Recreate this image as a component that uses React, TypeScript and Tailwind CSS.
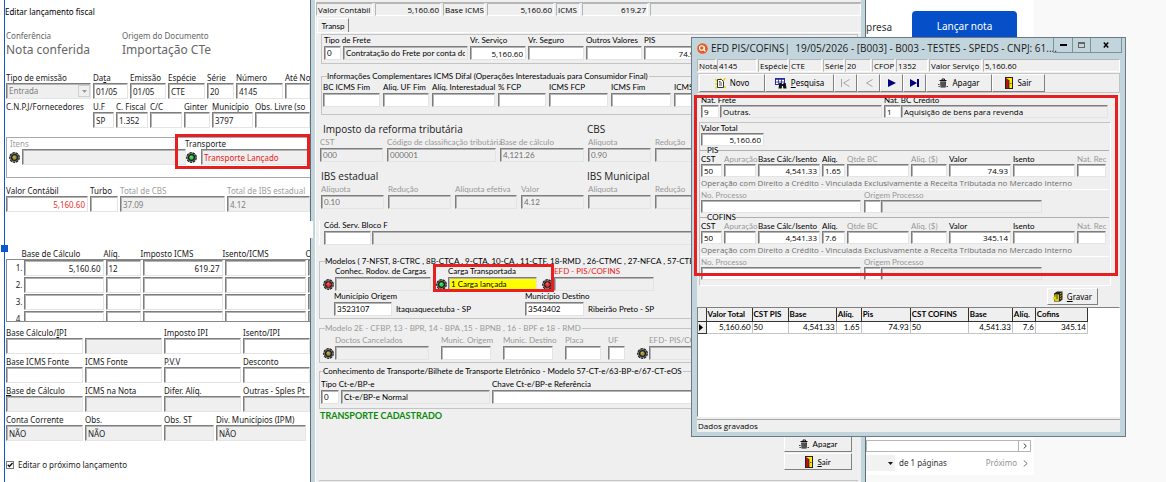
import type { ReactNode } from 'react'
import clsx from 'clsx'

const SUNKEN =
  'border border-t-[#7d7d7d] border-l-[#7d7d7d] border-r-[#e4e4e4] border-b-[#e4e4e4] shadow-[inset_1px_1px_0_#b4b4b4]'
const RAISED = 'border border-t-white border-l-white border-r-[#808080] border-b-[#808080] bg-[#efefef]'
const NOTO = "font-['Noto_Sans',sans-serif]"
const OPEN = "font-['Open_Sans',sans-serif]"
const SANS = "font-['Lato',sans-serif]"

type FieldProps = {
  label?: ReactNode
  name?: string
  value?: string
  className?: string
  labelClass?: string
  inputClass?: string
  gray?: boolean
  muted?: boolean
  right?: boolean
}

// Label above a sunken text box, sized for the main entry form
function FormField({ label, name, value = '', className, labelClass, inputClass, gray, muted, right }: FieldProps) {
  return (
    <label className={clsx('flex min-w-0 flex-col', className)}>
      {label && (
        <span className={clsx('whitespace-nowrap leading-[11px]', muted ? 'text-[#a0a0a0]' : 'text-[#1a1a1a]', labelClass)}>
          {label}
        </span>
      )}
      <input
        aria-label={label ? undefined : name}
        defaultValue={value}
        readOnly={gray}
        className={clsx(
          'h-4 w-full min-w-0 px-[2px] outline-none',
          SUNKEN,
          gray ? 'bg-[#efefef]' : 'bg-white',
          muted && 'text-[#808080]',
          right && 'text-right',
          inputClass,
        )}
      />
    </label>
  )
}

// Same idea, tighter, for the transport and EFD windows
function Field({ label, name, value = '', className, labelClass, inputClass, gray, muted, right }: FieldProps) {
  return (
    <label className={clsx('flex min-w-0 flex-col justify-end', className)}>
      {label && (
        <span className={clsx('whitespace-nowrap leading-[11px]', muted ? 'text-[#999]' : 'text-black', labelClass)}>
          {label}
        </span>
      )}
      <input
        aria-label={label ? undefined : name}
        defaultValue={value}
        readOnly={gray}
        className={clsx(
          'h-[14px] w-full min-w-0 px-[2px] outline-none',
          SUNKEN,
          gray ? 'bg-[#efefef]' : 'bg-white',
          muted && 'text-[#707070]',
          right && 'text-right',
          inputClass,
        )}
      />
    </label>
  )
}

function Led({ color, cross }: { color: string; cross?: boolean }) {
  return (
    <svg className="h-[11px] w-[11px] shrink-0" viewBox="0 0 11 11">
      <circle cx="5.5" cy="5.5" r="4.8" fill="#8c8c8c" stroke="#222" strokeWidth="1.2" strokeDasharray="2.5 0.8" />
      <circle cx="5.5" cy="5.5" r="3.6" fill="#1c1c1c" />
      <circle cx="5.5" cy="5.5" r="2.2" fill={color} />
      {cross && <path d="M5.5 2.6v5.8M2.6 5.5h5.8" stroke={color} strokeWidth="1.6" />}
      <circle cx="5" cy="4.8" r="0.7" fill="#fff" opacity="0.5" />
    </svg>
  )
}

function TrashIcon() {
  return (
    <svg className="h-[10px] w-[10px]" viewBox="0 0 10 10">
      <path d="M1.5 2.5h7M4 1h2.5v1.5H4z" stroke="#111" fill="none" />
      <path d="M2.2 3.5h5.8L7.6 9.5h-5z" fill="#222" />
      <path d="M4 4v5M6 4v5" stroke="#aaa" strokeWidth="0.7" />
      <path d="M0 6.5h1.6M.5 8.5h1.4M8.5 8.5H10" stroke="#111" strokeWidth="0.8" />
    </svg>
  )
}

function DoorIcon() {
  return (
    <svg className="h-3 w-2" viewBox="0 0 8 12">
      <rect x="0.5" y="0.5" width="7" height="11" fill="#ffeb00" stroke="#222" />
      <path d="M1 1l3 2v8.5L1 11z" fill="#b31217" />
      <path d="M4 3v8.5" stroke="#222" strokeWidth="0.8" />
      <path d="M5.3 6.5h1" stroke="#222" />
    </svg>
  )
}

function NewIcon() {
  return (
    <svg className="h-[11px] w-[11px]" viewBox="0 0 11 11">
      <path d="M0 1l3 3M10.5 0L8 3M0 10.5l2.5-2M11 10L8.5 8M5.5 0v2M0 6h2" stroke="#e8d800" strokeWidth="1.4" />
      <path d="M2.5 1.5h4l2 2v6h-6z" fill="#fff" stroke="#222" strokeWidth="0.9" />
      <path d="M4 5h3M4 7h3M4 3.5h1.5" stroke="#222" strokeWidth="0.8" />
    </svg>
  )
}

function SearchIcon() {
  return (
    <svg className="h-[11px] w-3" viewBox="0 0 12 11">
      <rect x="0.5" y="0.5" width="9" height="6" fill="#fff" stroke="#2a2a9c" />
      <path d="M0 1.5h10M3.5 1v5M6.5 1v5M1 4h8" stroke="#2a2a9c" strokeWidth="0.8" />
      <path d="M3.5 10.5L4.3 5h2.2l.6 1.5h.8L8.5 5h2.2l.8 5.5H8.3L8 8H7l-.3 2.5z" fill="#111" />
    </svg>
  )
}

function SaveIcon() {
  return (
    <svg className="h-[11px] w-[10px]" viewBox="0 0 10 11">
      <path d="M1 2.5L4 .5h5.5v8L7 10.5H1z" fill="#222" />
      <path d="M1.5 3.5h4.5v6.5H1.5z" fill="#ded000" />
      <path d="M2.5 5h2.5M2.5 7h2.5" stroke="#222" strokeWidth="0.8" />
      <path d="M7 3l1.5-1M7 5.5l1.5-1M7 8l1.5-1" stroke="#e8d800" strokeWidth="0.9" />
      <circle cx="1.5" cy="7" r="1.5" fill="#e8d800" />
    </svg>
  )
}

function LogoIcon() {
  return (
    <svg className="h-[11px] w-[11px] shrink-0" viewBox="0 0 11 11">
      <circle cx="5.5" cy="5.5" r="5.3" fill="#ea5b21" />
      <circle cx="4.8" cy="5" r="2.3" fill="none" stroke="#fff" strokeWidth="1.1" />
      <path d="M6.2 6.2l2.3 2.3M7.5 3.5v3" stroke="#fff" strokeWidth="1.1" />
    </svg>
  )
}

function ToolButton({ icon, className, children }: { icon?: ReactNode; className?: string; children?: ReactNode }) {
  return (
    <button type="button" className={clsx('flex items-center justify-center gap-1', RAISED, className)}>
      {icon}
      {children && <span>{children}</span>}
    </button>
  )
}

const icmsRows = [
  { id: '1.', base: '5,160.60', rate: '12', tax: '619.27' },
  { id: '2.', base: '', rate: '', tax: '' },
  { id: '3.', base: '', rate: '', tax: '' },
  { id: '4.', base: '', rate: '', tax: '' },
]

function CellInput({ label, value, right }: { label: string; value?: string; right?: boolean }) {
  return (
    <input
      aria-label={label}
      defaultValue={value}
      className={clsx('block h-4 w-full bg-white px-[2px] outline-none', SUNKEN, right && 'text-right')}
    />
  )
}

function EntryForm() {
  return (
    <section className={clsx('w-[310px] shrink-0 overflow-hidden bg-white pl-1 text-[8px] text-[#1a1a1a]', NOTO)}>
      <div className="relative min-h-full border-l border-[#1258cf] pl-px">
        <span className="absolute -left-1 top-[245px] h-[7px] w-[7px] bg-[#0b57d0]" />
        <h1 className="-ml-px pt-[6px] leading-3 text-black">Editar lançamento fiscal</h1>
        <div className="mt-3 flex text-[#666]">
          <div className="w-[116px]">
            <p className="leading-3">Conferência</p>
            <p className="text-xs leading-4">Nota conferida</p>
          </div>
          <div>
            <p className="leading-3">Origem do Documento</p>
            <p className="text-xs leading-4">Importação CTe</p>
          </div>
        </div>

        <div className="mt-[14px] flex gap-[2px]">
          <label className="flex w-[85px] flex-col">
            <span className="leading-[11px]">Tipo de emissão</span>
            <span className={clsx('flex h-4 bg-[#efefef]', SUNKEN)}>
              <select className="min-w-0 flex-1 appearance-none pl-[2px] text-[#808080] outline-none">
                <option>Entrada</option>
              </select>
              <span className="my-px flex w-3 items-center justify-center border border-[#d0d0d0]">
                <svg className="h-[3px] w-[5px]" viewBox="0 0 5 3"><path d="M0 0h5L2.5 3z" fill="#999" /></svg>
              </span>
            </span>
          </label>
          <FormField label={<>Da<u>t</u>a</>} value="01/05" className="w-[35px]" />
          <FormField label="Emissão" value="01/05" className="w-[36px]" />
          <FormField label="Espécie" value="CTE" className="w-[37px]" />
          <FormField label="Série" value="20" className="w-[27px]" />
          <FormField label="Número" value="4145" className="w-[47px]" />
          <FormField label="Até No" className="flex-1" />
        </div>

        <div className="mt-[2px] flex gap-[2px]">
          <span className="w-[85px] whitespace-nowrap leading-[11px]">C.N.P.J/Fornecedores</span>
          <FormField label="U.F" value="SP" className="w-[21px]" />
          <FormField label="C. Fiscal" value="1.352" className="w-8" />
          <FormField label="C/C" className="w-8" />
          <FormField label="Ginter" className="w-[26px]" />
          <FormField label="Município" value="3797" className="w-[41px]" />
          <FormField label="Obs. Livre (so" className="flex-1" />
        </div>

        <div className="relative mt-[9px] flex border-y border-l border-[#a8a8a8] pb-3 pl-[2px]">
          <div className="flex w-[177px] items-end gap-[2px]">
            <span className="mb-[2px] flex"><Led color="#a3923a" /></span>
            <FormField label="Itens" gray muted className="flex-1" labelClass="-ml-3" />
          </div>
          <div className="flex flex-1 items-end gap-1">
            <span className="mb-[2px] flex"><Led color="#2fcf3f" /></span>
            <FormField
              label="Transporte"
              value="Transporte Lançado"
              gray
              className="flex-1"
              labelClass="-ml-4"
              inputClass="text-[#f01818]"
            />
          </div>
          <span className="pointer-events-none absolute -top-1 right-0 h-[35px] w-[135px] border-[3px] border-[#e62020]" />
        </div>

        <div className="mt-[7px] flex gap-[2px]">
          <FormField label="Valor Contábil" value="5,160.60" right className="w-[82px]" inputClass="text-[#f03030]" />
          <FormField label="Turbo" className="w-[28px]" />
          <FormField label="Total de CBS" value="37.09" gray muted className="w-[105px]" />
          <FormField label="Total de IBS estadual" value="4.12" gray muted className="flex-1" />
        </div>

        <div className="mt-9">
          <div className="h-[74px] overflow-hidden border-b border-[#8a8a8a]">
            <table className="w-[384px] table-fixed border-collapse">
              <thead>
                <tr className="h-[11px] text-left leading-[11px]">
                  <th className="w-[17px]" />
                  <th className="w-[82px] font-normal"><span className="-ml-[2px] block">Base de Cálculo</span></th>
                  <th className="w-[37px] font-normal"><span className="-ml-[2px] block">Alíq.</span></th>
                  <th className="w-[82px] font-normal"><span className="-ml-[2px] block">Imposto ICMS</span></th>
                  <th className="w-[83px] font-normal"><span className="-ml-[2px] block">Isento/ICMS</span></th>
                  <th className="w-[83px] font-normal"><span className="-ml-[2px] block">Outras</span></th>
                </tr>
              </thead>
              <tbody className="border-l border-t border-[#8a8a8a]">
                {icmsRows.map((row) => (
                  <tr key={row.id} className="h-[17px]">
                    <td className="pr-px text-right">{row.id}</td>
                    <td className="pr-[2px]"><CellInput label="Base de Cálculo" value={row.base} right /></td>
                    <td className="pr-[2px]"><CellInput label="Alíq." value={row.rate} /></td>
                    <td className="pr-[2px]"><CellInput label="Imposto ICMS" value={row.tax} right /></td>
                    <td className="pr-[2px]"><CellInput label="Isento/ICMS" /></td>
                    <td><CellInput label="Outras" /></td>
                  </tr>
                ))}
              </tbody>
            </table>
          </div>
        </div>

        <div className="mt-[5px] flex gap-[2px]">
          <FormField label={<>Base Cálculo/<u>I</u>PI</>} className="w-[77px]" />
          <FormField name="Código IPI" gray className="w-[77px] justify-end" />
          <FormField label="Imposto IPI" className="w-[77px]" />
          <FormField label="Isento/IPI" className="flex-1" />
        </div>
        <div className="mt-[2px] flex gap-[2px]">
          <FormField label="Base ICMS Fonte" className="w-[77px]" />
          <FormField label="ICMS Fonte" className="w-[77px]" />
          <FormField label="P.V.V" className="w-[77px]" />
          <FormField label="Desconto" className="flex-1" />
        </div>
        <div className="mt-[2px] flex gap-[2px]">
          <FormField label={<><u>B</u>ase de Cálculo</>} gray className="w-[77px]" />
          <FormField label="ICMS na Nota" gray className="w-[77px]" />
          <FormField label="Difer. Alíq." gray className="w-[77px]" />
          <FormField label="Outras - Sples Pt" gray className="flex-1" />
        </div>
        <div className="mt-[2px] flex gap-[2px]">
          <FormField label="Conta Corrente" value="NÃO" gray className="w-[77px]" />
          <FormField label="Obs." value="NÃO" gray className="w-[77px]" />
          <FormField label="Obs. ST" gray className="w-[50px]" />
          <FormField label="Div. Municípios (IPM)" value="NÃO" gray className="w-[90px]" />
        </div>

        <label className="mt-[18px] flex items-center gap-1 leading-3">
          <span className="relative flex">
            <input
              type="checkbox"
              defaultChecked
              className="peer h-2 w-2 appearance-none border border-[#777] bg-white"
            />
            <svg className="pointer-events-none absolute inset-0 hidden h-2 w-2 peer-checked:block" viewBox="0 0 8 8">
              <path d="M1.8 3.8l1.6 1.7L6.5 2" fill="none" stroke="#111" strokeWidth="1.4" />
            </svg>
          </span>
          Editar o próximo lançamento
        </label>
      </div>
    </section>
  )
}

function InfoCell({ className, children }: { className?: string; children?: ReactNode }) {
  return (
    <span
      className={clsx(
        'whitespace-nowrap border border-t-[#b5b5b5] border-l-[#b5b5b5] border-r-white border-b-white px-px leading-[11px]',
        className,
      )}
    >
      {children}
    </span>
  )
}

function TransportWindow() {
  return (
    <section
      className={clsx(
        'relative flex w-[556px] shrink-0 flex-col border-l border-r border-[#5f6f78] bg-[#efefef] text-[8px] text-black',
        SANS,
      )}
    >
      <span className="absolute -left-px top-[221px] h-[17px] w-[3px] bg-white" />
      <div className="flex min-h-0 flex-1 flex-col border-l-4 border-r-4 border-[#c3d5dc]">
        <div className="flex min-h-0 flex-1 flex-col border-l border-white">
          <div className="h-[3px] shrink-0 border-b border-[#b5b5b5]" />
          <div className={clsx('flex h-[13px] shrink-0 gap-[2px]', OPEN)}>
            <InfoCell className="w-[57px]">Valor Contábil</InfoCell>
            <InfoCell className="w-[66px] text-right">5,160.60</InfoCell>
            <InfoCell className="w-[42px]">Base ICMS</InfoCell>
            <InfoCell className="w-[67px] text-right">5,160.60</InfoCell>
            <InfoCell className="w-[24px]">ICMS</InfoCell>
            <InfoCell className="w-[66px] text-right">619.27</InfoCell>
            <InfoCell className="flex-1" />
          </div>

          <div className="mt-[2px] flex shrink-0">
            <button
              type="button"
              className="ml-px h-[14px] w-8 border-l border-r border-t border-l-white border-r-[#808080] border-t-white leading-3"
            >
              Transp
            </button>
          </div>

          <div className="flex min-h-0 flex-1 flex-col border-t border-white px-[3px]">
            <div className="mt-px ml-[2px] flex gap-[2px] border border-[#c4c4c4] pb-[3px] pl-[2px]">
              <Field label="Tipo de Frete" value="0" className="w-[17px]" />
              <Field name="Descrição do frete" value="Contratação do Frete por conta do Remetente" gray className="w-[125px]" />
              <Field label="Vr. Serviço" value="5,160.60" right className="w-[56px]" inputClass={OPEN} />
              <Field label="Vr. Seguro" className="w-[56px]" />
              <Field label="Outros Valores" className="w-[56px]" />
              <Field label="PIS" value="74.93" right className="w-[58px]" inputClass={OPEN} />
            </div>

            <fieldset className="mt-[7px] ml-[2px] min-w-0 border border-[#c4c4c4] pb-[7px] pl-px">
              <legend className="ml-1 whitespace-nowrap pr-px leading-[10px]">
                Informações Complementares ICMS Difal (Operações Interestaduais para Consumidor Final)
              </legend>
              <div className="flex gap-[3px] pt-px">
                <Field label="BC ICMS Fim" className="w-[57px]" />
                <Field label="Aliq. UF Fim" className="w-[46px]" />
                <Field label="Alíq. Interestadual" className="w-[63px]" />
                <Field label="% FCP" className="w-[48px]" />
                <Field label="ICMS FCP" className="w-[59px]" />
                <Field label="ICMS Fim" className="w-[60px]" />
                <Field label="ICMS" className="w-[60px]" />
              </div>
            </fieldset>

            <div className={clsx('mt-[6px] flex text-[10px] leading-4 text-[#1a1a1a]', OPEN)}>
              <h2 className="w-[268px] pl-1">Imposto da reforma tributária</h2>
              <h2>CBS</h2>
            </div>
            <div className="flex gap-1 pl-px">
              <Field label="CST" value="000" gray muted className="w-[63px]" />
              <Field label="Código de classificação tributária" value="000001" gray muted className="w-[109px]" />
              <Field label="Base de cálculo" value="4,121.26" gray muted className="w-[84px]" />
              <Field label="Alíquota" value="0.90" gray muted className="w-[63px]" />
              <Field label="Redução" gray muted className="w-[63px]" />
            </div>

            <div className={clsx('mt-[6px] flex text-[10px] leading-4 text-[#1a1a1a]', OPEN)}>
              <h2 className="w-[268px] pl-[2px]">IBS estadual</h2>
              <h2>IBS Municipal</h2>
            </div>
            <div className="flex gap-1 pl-[2px]">
              <Field label="Alíquota" value="0.10" gray muted className="w-[63px]" />
              <Field label="Redução" gray muted className="w-[63px]" />
              <Field label="Alíquota efetiva" gray muted className="w-[62px]" />
              <Field label="Valor" value="4.12" gray muted className="w-[63px]" />
              <Field label="Alíquota" gray muted className="w-[63px]" />
              <Field label="Redução" gray muted className="w-[63px]" />
            </div>

            <div className="mt-[11px] flex gap-px border-l border-white pl-1">
              <Field label="Cód. Serv. Bloco F" className="w-[47px]" />
              <Field name="Descrição do serviço" gray className="flex-1" />
            </div>

            <fieldset className="mt-[11px] min-w-0 border border-[#c4c4c4] pb-[2px] pl-[3px]">
              <legend className="ml-[2px] whitespace-nowrap leading-[10px]">
                Modelos ( 7-NFST, 8-CTRC , 8B-CTCA , 9-CTA, 10-CA , 11-CTF, 18-RMD , 26-CTMC , 27-NFCA , 57-CTE , 63-BPE )
              </legend>
              <div className="relative flex">
                <div className="flex w-[113px] items-end gap-px">
                  <span className="mb-px flex"><Led color="#e83030" cross /></span>
                  <Field label="Conhec. Rodov. de Cargas" gray className="w-[96px]" />
                </div>
                <div className="flex w-[106px] items-end gap-px">
                  <span className="mb-px flex"><Led color="#2fcf3f" /></span>
                  <Field
                    label="Carga Transportada"
                    value="1 Carga lançada"
                    className="w-[89px]"
                    inputClass="!bg-[#ffff00]"
                  />
                </div>
                <div className="flex items-end gap-px">
                  <span className="mb-px flex"><Led color="#e83030" cross /></span>
                  <Field label="EFD - PIS/COFINS" gray className="w-[100px]" labelClass="!text-[#f02020]" />
                </div>
                <span className="pointer-events-none absolute -top-[2px] left-[110px] h-7 w-[121px] border-[3px] border-[#e62020]" />
              </div>
              <div className="flex items-end pl-[11px]">
                <Field label="Município Origem" value="3523107" className="w-[58px]" />
                <span className="w-[133px] pl-1 leading-[14px]">Itaquaquecetuba - SP</span>
                <Field label="Município Destino" value="3543402" className="w-[59px]" />
                <span className="pl-1 leading-[14px]">Ribeirão Preto - SP</span>
              </div>
            </fieldset>

            <fieldset className="mt-1 min-w-0 border border-[#c4c4c4] pb-[2px] pl-[3px]">
              <legend className="ml-[2px] whitespace-nowrap pr-px leading-[10px] text-[#999]">
                Modelo 2E - CFBP, 13 - BPR, 14 - BPA ,15 - BPNB , 16 - BPF e 18 - RMD
              </legend>
              <div className="flex gap-3 pt-[2px]">
                <div className="flex items-end gap-px">
                  <span className="mb-px flex"><Led color="#a3923a" /></span>
                  <Field label="Doctos Cancelados" gray muted className="w-[94px]" />
                </div>
                <Field label="Munic. Origem" muted className="w-[50px]" />
                <Field label="Munic. Destino" muted className="w-[50px]" />
                <div className="flex gap-[7px]">
                  <Field label="Placa" muted className="w-[36px]" />
                  <Field label="UF" muted className="w-[17px]" />
                </div>
                <div className="flex flex-1 items-end gap-px">
                  <span className="mb-px flex"><Led color="#a3923a" /></span>
                  <Field label="EFD- PIS/COFINS" gray muted className="flex-1" />
                </div>
              </div>
            </fieldset>

            <fieldset className="mt-[3px] min-w-0 border border-[#c4c4c4] pb-1 pl-px">
              <legend className="ml-[2px] whitespace-nowrap pr-px leading-[10px]">
                Conhecimento de Transporte/Bilhete de Transporte Eletrônico - Modelo 57-CT-e/63-BP-e/67-CT-eOS
              </legend>
              <div className="flex gap-[2px] pt-[3px]">
                <Field label="Tipo Ct-e/BP-e" value="0" className="w-[18px]" />
                <Field name="Descrição do tipo" value="Ct-e/BP-e Normal" gray className="w-[149px]" />
                <Field label="Chave Ct-e/BP-e Referência" className="flex-1" />
              </div>
            </fieldset>

            <p className="mt-px pl-px text-[9px] font-bold leading-[11px] text-[#0a8a0a]">TRANSPORTE CADASTRADO</p>

            <div className="mt-auto flex flex-col items-end gap-px border-b border-[#c4c4c4] pr-[6px] pb-[10px]">
              <ToolButton icon={<TrashIcon />} className="h-[17px] w-[68px]">Apagar</ToolButton>
              <ToolButton icon={<DoorIcon />} className="h-[17px] w-[68px]"><u>S</u>air</ToolButton>
            </div>
            <div className="h-px shrink-0" />
          </div>
        </div>
      </div>
    </section>
  )
}

function PortalPage() {
  return (
    <section className={clsx('flex min-w-0 flex-1 bg-[#f9f9f9] text-[8px] text-[#333]', NOTO)}>
      <div className="mb-[7px] flex w-[168px] flex-col justify-between bg-white">
        <div className="flex gap-5 pt-[11px]">
          <span className="w-[26px] pt-2 text-[10px] leading-4">presa</span>
          <button type="button" className="h-[31px] w-[105px] rounded bg-[#0550c8] text-[10px] text-white">
            Lançar nota
          </button>
        </div>
        <div>
          <div className="mr-[3px] flex h-3 justify-end border border-[#b5b5b5]">
            <button type="button" aria-label="Rolar para a direita" className="flex w-3 items-center justify-center border-l border-[#b5b5b5]">
              <svg className="h-[6px] w-1" viewBox="0 0 4 6"><path d="M.7.5L3.3 3 .7 5.5" fill="none" stroke="#444" /></svg>
            </button>
          </div>
          <div className="mt-[3px] mb-1 flex h-4 items-center">
            <span className="flex h-4 w-[29px] items-center justify-end bg-[#f2f2f2] pr-[2px]">
              <svg className="h-[3px] w-[5px]" viewBox="0 0 5 3"><path d="M0 0h5L2.5 3z" fill="#111" /></svg>
            </span>
            <span className="pl-1">de 1 páginas</span>
            <a href="#proximo" className="ml-auto flex items-center gap-[6px] pr-[6px] text-[#949494]">
              Próximo
              <svg className="h-[7px] w-[5px]" viewBox="0 0 5 7"><path d="M.7.5L4.2 3.5.7 6.5" fill="none" stroke="#777" /></svg>
            </a>
          </div>
        </div>
      </div>
    </section>
  )
}

function TaxGroup({ title, value }: { title: string; value: { rate: string; amount: string } }) {
  return (
    <>
      <fieldset className="mr-px min-w-0 border-b border-t border-b-white border-t-[#b0b0b0] pl-px">
        <legend className="ml-[6px] leading-[8px]">{title}</legend>
        <div className="flex gap-[2px]">
          <EfdField label="CST" value="50" className="w-[21px]" />
          <EfdField label="Apuração" muted className="w-[32px]" />
          <EfdField label="Base Cálc/Isento" value="4,541.33" right className="w-[62px]" />
          <EfdField label="Alíq." value={value.rate} className="w-[23px]" />
          <EfdField label="Qtde BC" muted className="w-[62px]" />
          <EfdField label="Aliq. ($)" muted className="w-[36px]" />
          <EfdField label="Valor" value={value.amount} right className="w-[62px]" />
          <EfdField label="Isento" className="w-[62px]" />
          <EfdField label="Nat. Rec" muted className="w-[29px]" />
        </div>
        <p className={clsx('whitespace-nowrap leading-3 text-[#6e6e6e]', OPEN)}>
          Operação com Direito a Crédito - Vinculada Exclusivamente a Receita Tributada no Mercado Interno
        </p>
      </fieldset>
      <div className="flex pl-px">
        <EfdField label="No. Processo" muted className="mr-[3px] w-[160px]" />
        <EfdField label="Origem Processo" muted className="w-[17px]" />
        <EfdField name="Descrição da origem" gray className="w-[161px]" />
      </div>
    </>
  )
}

function EfdField({ inputClass, labelClass, ...props }: FieldProps) {
  return (
    <Field
      {...props}
      labelClass={clsx('!leading-[10px]', labelClass)}
      inputClass={clsx('!h-[13px]', OPEN, inputClass)}
    />
  )
}

const gridColumns = [
  { title: 'Valor Total', width: 'w-[46px]', value: '5,160.60', right: true },
  { title: 'CST PIS', width: 'w-[36px]', value: '50' },
  { title: 'Base', width: 'w-[48px]', value: '4,541.33', right: true },
  { title: 'Alíq.', width: 'w-[25px]', value: '1.65', right: true },
  { title: 'Pis', width: 'w-[49px]', value: '74.93', right: true },
  { title: 'CST COFINS', width: 'w-[58px]', value: '50' },
  { title: 'Base', width: 'w-[44px]', value: '4,541.33', right: true },
  { title: 'Alíq.', width: 'w-[23px]', value: '7.6', right: true },
  { title: 'Cofins', width: 'w-[52px]', value: '345.14', right: true },
]

function EfdWindow() {
  return (
    <section
      className={clsx(
        'absolute left-[691px] top-[37px] w-[435px] border border-[#6c7b83] bg-[#c3d5dc] px-[5px] pb-1 text-[8px] text-black',
        SANS,
      )}
    >
      <header className={clsx('-mr-[2px] flex h-[21px] justify-between', OPEN)}>
        <div className="flex min-w-0 flex-1 items-center gap-[3px]">
          <LogoIcon />
          <h2 className="whitespace-pre text-[10px] text-[#1a1a1a]">
            {'EFD PIS/COFINS|  19/05/2026 - [B003] - B003 - TESTES - SPEDS - CNPJ: 61....'}
          </h2>
        </div>
        <div className="flex h-[15px] border-b border-l border-r border-[#7f9098]">
          <button type="button" aria-label="Minimizar" className="flex w-[18px] items-center justify-center">
            <span className="h-[2px] w-[7px] bg-black" />
          </button>
          <button type="button" aria-label="Maximizar" className="flex w-[19px] items-center justify-center border-x border-[#7f9098]">
            <span className="h-[6px] w-[7px] border border-t-2 border-[#666]" />
          </button>
          <button type="button" aria-label="Fechar" className="flex w-[30px] items-center justify-center">
            <svg className="h-[6px] w-[6px]" viewBox="0 0 6 6"><path d="M.8.5l4.4 5M5.2.5L.8 5.5" stroke="#000" strokeWidth="1.5" /></svg>
          </button>
        </div>
      </header>

      <div className="bg-[#efefef]">
        <div className={clsx('flex h-[13px] gap-px', OPEN)}>
          <InfoCell className="w-[19px]">Nota</InfoCell>
          <InfoCell className="w-[40px]">4145</InfoCell>
          <InfoCell className="w-[30px]">Espécie</InfoCell>
          <InfoCell className="w-[33px]">CTE</InfoCell>
          <InfoCell className="w-[21px]">Série</InfoCell>
          <InfoCell className="w-[26px]">20</InfoCell>
          <InfoCell className="w-[23px]">CFOP</InfoCell>
          <InfoCell className="w-[32px]">1352</InfoCell>
          <InfoCell className="w-[53px]">Valor Serviço</InfoCell>
          <InfoCell className="flex-1">5,160.60</InfoCell>
        </div>

        <div className={clsx('mt-px flex h-5 border border-[#c4c4c4] pl-px', NOTO)}>
          <ToolButton icon={<NewIcon />} className="w-[66px]">Novo</ToolButton>
          <ToolButton icon={<SearchIcon />} className="w-[69px]"><u>P</u>esquisa</ToolButton>
          <ToolButton
            className="w-[23px]"
            icon={<svg aria-label="Primeiro" className="h-2 w-[9px]" viewBox="0 0 9 8"><path d="M.5 0v8M8.5.5L2.5 4l6 3.5" fill="none" stroke="#a5a5a5" /></svg>}
          />
          <ToolButton
            className="w-[23px]"
            icon={<svg aria-label="Anterior" className="h-2 w-2" viewBox="0 0 8 8"><path d="M7.5.5L1.5 4l6 3.5" fill="none" stroke="#a5a5a5" /></svg>}
          />
          <ToolButton
            className="w-[23px]"
            icon={<svg aria-label="Seguinte" className="h-2 w-2" viewBox="0 0 8 8"><path d="M0 0l8 4-8 4z" fill="#00007c" /></svg>}
          />
          <ToolButton
            className="w-[23px]"
            icon={<svg aria-label="Último" className="h-2 w-[9px]" viewBox="0 0 9 8"><path d="M0 0l7 4-7 4zM7 0h2v8H7z" fill="#00007c" /></svg>}
          />
          <ToolButton icon={<TrashIcon />} className="w-[66px]">Apagar</ToolButton>
          <ToolButton icon={<DoorIcon />} className="w-[53px]">Sair</ToolButton>
        </div>

        <div className="flex pt-[2px] pl-1">
          <EfdField label="Nat. Frete" value="9" className="mr-px w-[18px]" />
          <EfdField name="Descrição do frete" value="Outras." gray className="mr-[2px] w-[162px]" />
          <EfdField label="Nat. BC Crédito" value="1" className="w-[17px]" />
          <EfdField name="Descrição do crédito" value="Aquisição de bens para revenda" gray className="mr-3 flex-1" />
        </div>

        <div className="mt-1 ml-[2px] mr-[9px] border border-t-[#c4c4c4] border-l-[#c4c4c4] border-r-white border-b-white pb-[5px]">
          <div className="flex pl-px">
            <EfdField label="Valor Total" value="5,160.60" right className="w-[63px]" />
          </div>
          <TaxGroup title="PIS" value={{ rate: '1.65', amount: '74.93' }} />
          <TaxGroup title="COFINS" value={{ rate: '7.6', amount: '345.14' }} />
        </div>

        <div className={clsx('mt-[2px] flex justify-end pr-[22px]', NOTO)}>
          <ToolButton icon={<SaveIcon />} className="h-[17px] w-[51px]"><u>G</u>ravar</ToolButton>
        </div>

        <div className="mt-[2px] h-[110px] border border-t-[#808080] border-l-[#808080] border-r-white border-b-white bg-white">
          <table className="w-[390px] table-fixed border-collapse">
            <thead>
              <tr className="h-[13px] bg-[#efefef] text-left leading-[11px]">
                <th className="w-2 border-b border-r border-[#333]" />
                {gridColumns.map((col, i) => (
                  <th key={i} className={clsx('whitespace-nowrap border-b border-r border-[#333] pl-px', col.width)}>
                    {col.title}
                  </th>
                ))}
              </tr>
            </thead>
            <tbody>
              <tr className="h-3 leading-[11px]">
                <td className="border-b border-r border-[#333] bg-[#efefef]">
                  <svg className="ml-px h-[7px] w-1" viewBox="0 0 4 7"><path d="M0 0l4 3.5L0 7z" fill="#000" /></svg>
                </td>
                {gridColumns.map((col, i) => (
                  <td key={i} className={clsx('border-b border-r border-[#c4c4c4] px-px', col.right && 'text-right')}>
                    {col.value}
                  </td>
                ))}
              </tr>
            </tbody>
          </table>
        </div>

        <p className={clsx('mt-[2px] border-t border-[#a8a8a8] pl-px leading-3', OPEN)}>Dados gravados</p>
      </div>

      <span className="pointer-events-none absolute left-[2px] right-[7px] top-[57px] h-[181px] border-[3px] border-[#e62020]" />
    </section>
  )
}

export default function App() {
  return (
    <main className="relative flex h-screen overflow-hidden bg-[#f9f9f9]">
      <EntryForm />
      <TransportWindow />
      <PortalPage />
      <EfdWindow />
    </main>
  )
}
